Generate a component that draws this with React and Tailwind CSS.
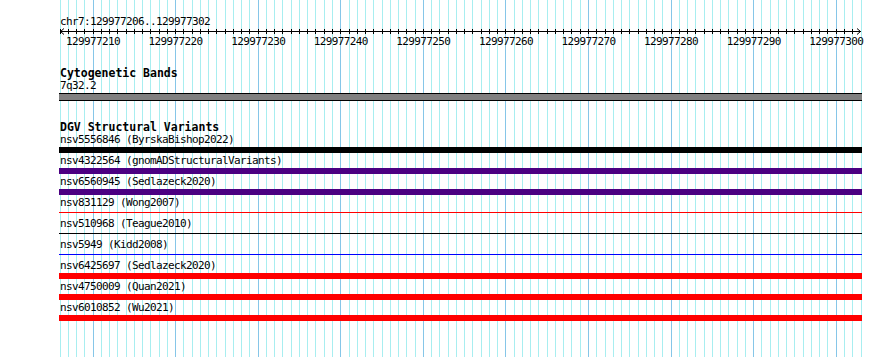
import React from 'react';

const START = 129977206;
const BASES = 97;
const PX = 801 / BASES;

// local x inside the 803px track column (column starts at page x 59)
const localX = (k) => Math.floor(1 + k * PX) + 0.5;

const variants = [
  { id: 'nsv5556846', src: 'ByrskaBishop2022', kind: 'bar', color: 'bg-black' },
  { id: 'nsv4322564', src: 'gnomADStructuralVariants', kind: 'bar', color: 'bg-[#4b0082]' },
  { id: 'nsv6560945', src: 'Sedlazeck2020', kind: 'bar', color: 'bg-[#4b0082]' },
  { id: 'nsv831129', src: 'Wong2007', kind: 'line', color: 'bg-[#ff0000]' },
  { id: 'nsv510968', src: 'Teague2010', kind: 'line', color: 'bg-black' },
  { id: 'nsv5949', src: 'Kidd2008', kind: 'line', color: 'bg-[#0000ff]' },
  { id: 'nsv6425697', src: 'Sedlazeck2020', kind: 'bar', color: 'bg-[#ff0000]' },
  { id: 'nsv4750009', src: 'Quan2021', kind: 'bar', color: 'bg-[#ff0000]' },
  { id: 'nsv6010852', src: 'Wu2021', kind: 'bar', color: 'bg-[#ff0000]' },
];

function Grid() {
  const lines = [];
  for (let k = 0; k <= BASES; k++) {
    const x = localX(k) + 59;
    const major = (START + k) % 10 === 0;
    lines.push(
      <line key={k} x1={x} x2={x} y1={0} y2={357} stroke={major ? '#86c6e8' : '#a8eef0'} strokeWidth="1" />
    );
  }
  return (
    <svg className="absolute inset-0" width="890" height="357">
      {lines}
    </svg>
  );
}

function Ruler() {
  const ticks = [];
  const labels = [];
  for (let k = 0; k < BASES; k++) {
    const x = localX(k);
    ticks.push(<line key={k} x1={x} x2={x} y1={1} y2={6} stroke="#000" strokeWidth="1" />);
    const pos = START + k;
    if (pos % 10 === 0) {
      labels.push(
        <text
          key={pos}
          x={1 + k * PX}
          y={17}
          textAnchor="middle"
          fontSize="11"
          letterSpacing="-0.62"
          fill="#000"
          fontFamily="DejaVu Sans Mono, monospace"
        >
          {pos}
        </text>
      );
    }
  }
  return (
    <svg width="803" height="20" className="overflow-visible block">
      <line x1={1} x2={802} y1={3.5} y2={3.5} stroke="#000" strokeWidth="1" />
      {ticks}
      <polyline points="5,0.5 1.5,3.5 5,6.5" fill="none" stroke="#000" strokeWidth="1" />
      <polyline points="798,0.5 801.5,3.5 798,6.5" fill="none" stroke="#000" strokeWidth="1" />
      {labels}
    </svg>
  );
}

function VariantRow({ v }) {
  return (
    <div>
      <div className="h-[13px] leading-[13px] pl-px whitespace-nowrap">
        {v.id} ({v.src})
      </div>
      {v.kind === 'bar' ? (
        <div className={`h-[6px] my-px ${v.color}`} />
      ) : (
        <div className="h-[6px] my-px pt-[2px]">
          <div className={`h-px ${v.color}`} />
        </div>
      )}
    </div>
  );
}

export default function App() {
  return (
    <div className="relative w-[890px] h-[357px] bg-white overflow-hidden text-black font-['DejaVu_Sans_Mono',monospace] text-[11px] tracking-[-0.62px]">
      <Grid />
      <div className="relative ml-[59px] w-[803px] flex flex-col">
        <div className="h-[15px]" />
        <div className="h-[13px] leading-[13px] pl-px">chr7:129977206..129977302</div>
        <Ruler />

        {/* Cytogenetic bands */}
        <div className="h-[19px]" />
        <div className="h-[12px] leading-[12px] pl-px text-[11.5px] tracking-normal font-bold whitespace-nowrap">Cytogenetic Bands</div>
        <div className="h-[13px] leading-[13px] pl-px">7q32.2</div>
        <div className="h-[8px] mt-px bg-[#808080] border-y border-black" />

        {/* DGV */}
        <div className="h-[20px]" />
        <div className="h-[12px] leading-[12px] pl-px text-[11.5px] tracking-normal font-bold whitespace-nowrap">DGV Structural Variants</div>
        {variants.map((v) => (
          <VariantRow key={v.id} v={v} />
        ))}
      </div>
    </div>
  );
}
